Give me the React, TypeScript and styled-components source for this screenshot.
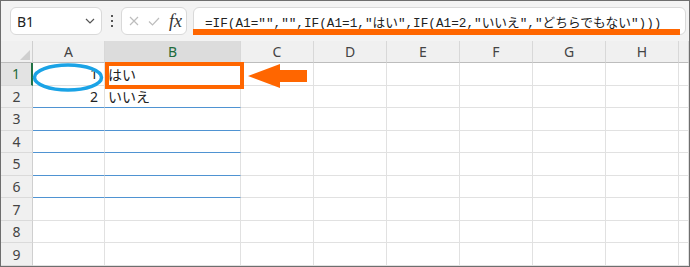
import styled, { createGlobalStyle } from "styled-components";

const GlobalStyle = createGlobalStyle`
  html, body { margin: 0; padding: 0; background: #fff; }
  body { font-family: "Noto Sans", "Noto Sans CJK JP", sans-serif; color: #222; }
`;

const COLS = ["A", "B", "C", "D", "E", "F", "G", "H", ""];

type Row = { n: number; a?: string; b?: string; blue?: boolean };

const rows: Row[] = [
  { n: 1, a: "1", b: "はい" },
  { n: 2, a: "2", b: "いいえ", blue: true },
  { n: 3, blue: true },
  { n: 4, blue: true },
  { n: 5, blue: true },
  { n: 6, blue: true },
  { n: 7 },
  { n: 8 },
  { n: 9 },
];

const Frame = styled.div`
  position: relative;
  width: 690px;
  height: 267px;
  box-sizing: border-box;
  border: 1px solid #6e6e6e;
  background: #fff;
  display: flex;
  flex-direction: column;
  overflow: hidden;
`;

const Toolbar = styled.div`
  flex: none;
  height: 40px;
  box-sizing: border-box;
  padding: 0 3px 0 9px;
  background: #f3f3f3;
  display: flex;
  align-items: center;
`;

const Box = styled.div`
  height: 28px;
  box-sizing: border-box;
  background: #fff;
  border: 1px solid #d9d9d9;
  border-radius: 6px;
  display: flex;
  align-items: center;
`;

const NameBox = styled(Box)`
  width: 92px;
  padding: 0 6px;
  justify-content: space-between;
  font-size: 14px;
  color: #222;
`;

const Dots = styled.div`
  width: 19px;
  display: flex;
  flex-direction: column;
  align-items: center;
  gap: 3px;
  span {
    width: 2px;
    height: 2px;
    background: #555;
  }
`;

const FxBox = styled(Box)`
  width: 66px;
  padding: 0 4px 0 7px;
  justify-content: space-between;
`;

const Fx = styled.span`
  font-family: "Liberation Serif", serif;
  font-style: italic;
  font-size: 18px;
  line-height: 1;
  color: #333;
`;

const FormulaBox = styled(Box)`
  flex: 1;
  margin-left: 6px;
  padding-left: 11px;
  font-family: "Liberation Mono", "Noto Sans CJK JP", monospace;
  font-size: 12.7px;
  color: #222;
  white-space: nowrap;
`;

const Grid = styled.div`
  flex: 1;
  display: grid;
  grid-template-columns: 32px 72px 136px repeat(6, 73px) 1fr;
  grid-template-rows: 22px repeat(9, 1fr);
`;

const Corner = styled.div`
  background: #f0f0f0;
  border-right: 1px solid #cfcfcf;
  border-bottom: 1px solid #bdbdbd;
  display: flex;
  align-items: flex-end;
  justify-content: flex-end;
  padding: 0 2px 2px 0;
`;

const ColHead = styled.div<{ $active?: boolean }>`
  background: ${(p) => (p.$active ? "#dcdcdc" : "#f0f0f0")};
  color: ${(p) => (p.$active ? "#1e6b3c" : "#444")};
  border-right: 1px solid #d8d8d8;
  border-bottom: 1px solid #bdbdbd;
  font-size: 14px;
  display: flex;
  align-items: center;
  justify-content: center;
`;

const RowHead = styled.div<{ $active?: boolean }>`
  background: ${(p) => (p.$active ? "#e3e3e3" : "#f0f0f0")};
  color: ${(p) => (p.$active ? "#1e6b3c" : "#444")};
  border-right: ${(p) => (p.$active ? "2px solid #217346" : "1px solid #cfcfcf")};
  border-bottom: 1px solid #dadada;
  font-size: 14px;
  display: flex;
  align-items: center;
  justify-content: center;
`;

const Cell = styled.div<{ $blue?: boolean; $right?: boolean }>`
  border-right: 1px solid #e1e1e1;
  border-bottom: 1px solid ${(p) => (p.$blue ? "#4f93d2" : "#e1e1e1")};
  padding: 0 ${(p) => (p.$right ? "6px" : "3px")};
  font-size: 14px;
  color: #222;
  display: flex;
  align-items: center;
  justify-content: ${(p) => (p.$right ? "flex-end" : "flex-start")};
  white-space: nowrap;
  overflow: hidden;
`;

const Underline = styled.div`
  position: absolute;
  left: 192px;
  top: 28px;
  width: 487px;
  height: 6px;
  background: #ff6600;
`;

const Highlight = styled.div`
  position: absolute;
  left: 104px;
  top: 61px;
  width: 139px;
  height: 27px;
  box-sizing: border-box;
  border: 4px solid #ff6600;
`;

const Mark = styled.svg`
  position: absolute;
  overflow: visible;
`;

export default function App() {
  return (
    <>
      <GlobalStyle />
      <Frame>
        <Toolbar>
          <NameBox>
            <span>B1</span>
            <svg width="10" height="6" viewBox="0 0 10 6">
              <polyline points="1,1 5,5 9,1" fill="none" stroke="#555" strokeWidth="1.2" />
            </svg>
          </NameBox>
          <Dots>
            <span />
            <span />
            <span />
          </Dots>
          <FxBox>
            <svg width="10" height="10" viewBox="0 0 10 10">
              <path d="M1 1L9 9M9 1L1 9" stroke="#bdbdbd" strokeWidth="1.2" />
            </svg>
            <svg width="12" height="9" viewBox="0 0 12 9">
              <polyline points="1,4.5 4.5,8 11,1" fill="none" stroke="#bdbdbd" strokeWidth="1.2" />
            </svg>
            <Fx>fx</Fx>
          </FxBox>
          <FormulaBox>
            =IF(A1="","",IF(A1=1,"はい",IF(A1=2,"いいえ","どちらでもない")))
          </FormulaBox>
        </Toolbar>
        <Grid>
          <Corner>
            <svg width="10" height="10" viewBox="0 0 10 10">
              <polygon points="10,0 10,10 0,10" fill="#cfcfcf" />
            </svg>
          </Corner>
          {COLS.map((c, i) => (
            <ColHead key={i} $active={c === "B"}>
              {c}
            </ColHead>
          ))}
          {rows.map((r) => (
            <>
              <RowHead key={`h${r.n}`} $active={r.n === 1}>
                {r.n}
              </RowHead>
              <Cell key={`a${r.n}`} $blue={r.blue} $right>
                {r.a}
              </Cell>
              <Cell key={`b${r.n}`} $blue={r.blue}>
                {r.b}
              </Cell>
              {COLS.slice(2).map((c, i) => (
                <Cell key={`${r.n}-${i}`} />
              ))}
            </>
          ))}
        </Grid>
        <Underline />
        <Highlight />
        <Mark width="72" height="31" style={{ left: 32, top: 62 }}>
          <ellipse cx="35" cy="14.5" rx="33.5" ry="12.5" fill="none" stroke="#1aa3e6" strokeWidth="3.5" />
        </Mark>
        <Mark width="62" height="26" style={{ left: 246, top: 62 }}>
          <polygon points="1,13 33,1 33,7 60,7 60,19 33,19 33,25" fill="#ff6600" />
        </Mark>
      </Frame>
    </>
  );
}
